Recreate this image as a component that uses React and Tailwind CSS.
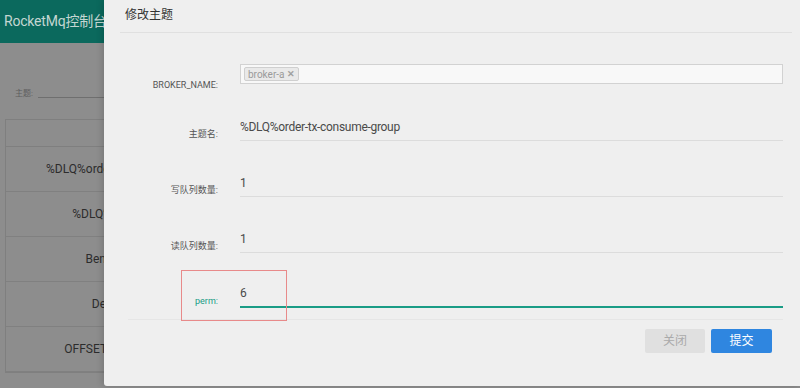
import { useState } from "react";

const font = { fontFamily: "Roboto, 'Noto Sans CJK SC', sans-serif" };

const topics = [
  "%DLQ%order-tx-consume-group",
  "%DLQ%test_group_01",
  "Benchmark_Test",
  "DefaultCluster",
  "OFFSET_MOVED_EVENT",
];

const FieldRow = ({ label, value, active, className }) => (
  <div className={`flex items-end ${className}`}>
    <div
      className={`w-[98px] text-right text-[9px] leading-[12px] mb-[1px] ${
        active ? "text-[#1a9c86]" : "text-[#555]"
      }`}
    >
      {label}
    </div>
    <div
      className={`ml-[22px] flex-1 pb-[3px] text-[12px] tracking-[-0.3px] leading-[20px] text-[#4a4a4a] ${
        active ? "border-b-2 border-[#1a9c86]" : "border-b border-[#dcdcdc]"
      }`}
    >
      {value}
    </div>
  </div>
);

export default function App() {
  const [perm] = useState("6");

  return (
    <div
      className="relative w-[800px] h-[388px] overflow-hidden bg-[#8d8d8d]"
      style={font}
    >
      {/* PAGE BEHIND THE MODAL */}
      <div className="h-[43px] bg-[#0b695d] flex items-center pl-[4px]">
        <span className="text-[14px] tracking-[-0.2px] text-[#c4d6d2]">RocketMq控制台</span>
      </div>

      <div className="flex items-end pl-[15px] mt-[42px] h-[14px]">
        <span className="text-[8px] text-[#5e5e5e] leading-[10px]">主题:</span>
        <div className="ml-[5px] w-[200px] border-b border-[#6f6f6f] mb-[1px]" />
      </div>

      <div className="ml-[5px] mt-[20px] w-[400px] border border-[#7f7f7f]">
        <div className="h-[27px] border-b border-[#7f7f7f]" />
        {topics.map((t) => (
          <div
            key={t}
            className="h-[45px] border-b border-[#808080] flex items-center"
          >
            <div className="w-[248px] text-center text-[12px] text-[#2c2c2c]">
              {t}
            </div>
          </div>
        ))}
      </div>

      {/* MODAL */}
      <div className="absolute left-[104px] top-0 right-0 h-[386px] bg-[#efefef] rounded-bl-[3px] shadow-[-2px_0_6px_rgba(0,0,0,0.15)]">
        {/* HEADER */}
        <div className="mx-[16px] mr-[8px] h-[33px] border-b border-[#e0e0e0] flex items-center pl-[5px] pb-[3px]">
          <span className="text-[12px] text-[#333]">修改主题</span>
        </div>

        {/* FORM */}
        <div className="ml-[16px] mr-[17px] mt-[31px]">
          <div className="flex items-start h-[28px]">
            <div className="w-[98px] text-right text-[9px] leading-[12px] text-[#555] mt-[15px]">
              BROKER_NAME:
            </div>
            <div className="ml-[22px] flex-1 h-[20px] border border-[#d2d2d2] bg-[#f8f8f8] flex items-center pl-[3px]">
              <span className="h-[14px] px-[3px] flex items-center gap-[3px] border border-[#cfcfcf] bg-[#e9e9e9] rounded-[2px] text-[10px] text-[#9a9a9a]">
                broker-a
                <span className="text-[9px] font-bold leading-none text-[#a0a0a0]">✕</span>
              </span>
            </div>
          </div>

          <FieldRow
            className="h-[49px]"
            label="主题名:"
            value="%DLQ%order-tx-consume-group"
          />
          <FieldRow className="h-[56px]" label="写队列数量:" value="1" />
          <FieldRow className="h-[56px]" label="读队列数量:" value="1" />
          <FieldRow className="h-[55px]" label="perm:" value={perm} active />
        </div>

        {/* FOOTER */}
        <div className="ml-[24px] mr-[17px] mt-[11px] border-t border-[#e6e6e6]" />
        <div className="flex justify-end gap-[6px] mr-[28px] mt-[9px]">
          <button className="w-[60px] h-[24px] rounded-[2px] bg-[#e0e0e0] text-[12px] text-[#aaa]">
            关闭
          </button>
          <button className="w-[61px] h-[24px] rounded-[2px] bg-[#2f86e0] text-[12px] text-white">
            提交
          </button>
        </div>

        {/* ANNOTATION BOX */}
        <div className="absolute left-[77px] top-[270px] w-[106px] h-[51px] border border-[#e88a8a]" />
      </div>
    </div>
  );
}
